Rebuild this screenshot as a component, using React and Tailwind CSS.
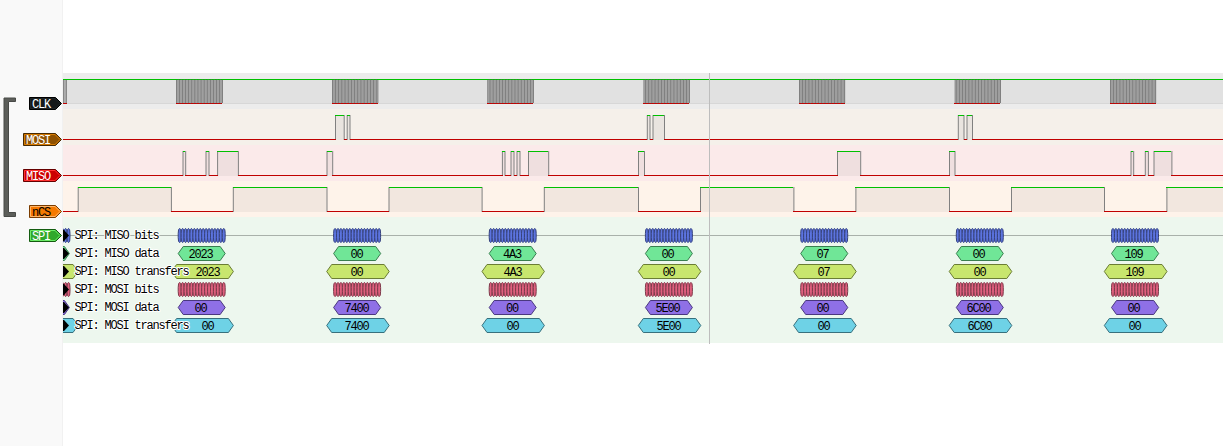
import React from "react";

const FONT = '"Liberation Mono", "DejaVu Sans Mono", monospace';

const TAGS = [
  { name: "CLK", w: 33, fill: "#16191a", light: "#1f2425", dark: "#000000", text: "#ffffff", gap: "mb-[22px]" },
  { name: "MOSI", w: 39, fill: "#8f5202", light: "#d67b03", dark: "#472901", text: "#ffffff", gap: "mb-[22px]" },
  { name: "MISO", w: 39, fill: "#cc0000", light: "#ff3232", dark: "#660000", text: "#ffffff", gap: "mb-[22px]" },
  { name: "nCS", w: 33, fill: "#f57900", light: "#ffb56a", dark: "#7a3c00", text: "#000000", gap: "mb-[10px]" },
  { name: "SPI", w: 33, fill: "#30a82c", light: "#6bea66", dark: "#145c11", text: "#ffffff", gap: "" },
];

const BURSTS = [
  [176.2, 222.8], [332.2, 378.2], [487.4, 533.8], [643.6, 689.8],
  [799.2, 845], [954.8, 1000.8], [1110.2, 1156],
];

const MOSI = [
  [335.5, 344.2], [347.2, 350], [647.3, 650], [653, 664.5], [958.3, 964], [967, 972.5],
];

const MISO = [
  [183, 185.7], [206, 209], [217.6, 238.4], [327, 332.7], [502.4, 505], [511, 514], [517, 520],
  [528.5, 548.7], [638.5, 644.5], [837.5, 860.7], [949.5, 955], [1131, 1133.7], [1145.3, 1148.4], [1154, 1171.9],
];

const NCS = [
  [78.2, 171.4], [233.3, 327], [389, 482.1], [544.3, 638.5], [700.5, 793.9],
  [855.9, 949.5], [1011.5, 1104.5], [1166.9, 1230],
];

const BITS = [[178.2, 225.2], [333.6, 380.7], [489.2, 536.2], [645.4, 692.4], [800.7, 847.8], [956.3, 1003.3], [1111.5, 1158.7]];
const XFERS = [[171.6, 233.4], [326.7, 389.2], [482, 544.4], [638.3, 700.8], [793.6, 856.2], [949.2, 1011.8], [1104.3, 1167]];
const BIT_MID = [200.5, 356.5, 512, 667.5, 822.5, 978.5, 1133.5];
const XFER_MID = [207.5, 356.5, 512.5, 668.5, 823.5, 979.5, 1134.5];
const MISO_VALUES = ["2023", "00", "4A3", "00", "07", "00", "109"];
const MOSI_VALUES = ["00", "7400", "00", "5E00", "00", "6C00", "00"];

const DECODER_ROWS = [
  { label: "SPI: MISO bits", kind: "bits", fill: "#5c74e0", stroke: "#36427c" },
  { label: "SPI: MISO data", kind: "hex", spans: BITS, mids: BIT_MID, values: MISO_VALUES, fill: "#70e697", stroke: "#387f4f", end: 69.4 },
  { label: "SPI: MISO transfers", kind: "hex", spans: XFERS, mids: XFER_MID, values: MISO_VALUES, fill: "#c8e66e", stroke: "#6b7d35", end: 78 },
  { label: "SPI: MOSI bits", kind: "bits", fill: "#e0607e", stroke: "#7d3a4a" },
  { label: "SPI: MOSI data", kind: "hex", spans: BITS, mids: BIT_MID, values: MOSI_VALUES, fill: "#8f70e6", stroke: "#4a387f", end: 69.4 },
  { label: "SPI: MOSI transfers", kind: "hex", spans: XFERS, mids: XFER_MID, values: MOSI_VALUES, fill: "#6ed2e6", stroke: "#37707d", end: 78 },
];

function Label({ x, y, children, ...rest }) {
  return (
    <text x={x} y={y} fontFamily={FONT} fontSize="12" letterSpacing="-1.2" {...rest}>
      {children}
    </text>
  );
}

function Tag({ name, w, fill, light, dark, text, gap }) {
  return (
    <svg className={`block shrink-0 ${gap}`} width={w} height="14" viewBox={`0 0 ${w} 14`}>
      <path d={`M.5 .5H${w - 6.5}L${w - 0.5} 6.5L${w - 6.5} 12.5H.5Z`} fill={fill} stroke={dark} />
      <path d={`M1.5 1.5H${w - 7}L${w - 2} 6.5L${w - 7} 11.5H1.5Z`} fill="none" stroke={light} />
      <Label x="3" y="11" fill={text}>{name}</Label>
    </svg>
  );
}

function Bracket() {
  return (
    <svg className="mt-[97px] ml-[3px] block h-[121px] w-[13px]" viewBox="0 0 13 121">
      <path d="M1 1H12.5V4.5H5.5V115.5H12.5V119.5H1Z" fill="#5c5e5a" stroke="#484a47" strokeLinejoin="round" />
    </svg>
  );
}

function Wave({ highs, bg }) {
  const lows = [];
  let at = 63;
  highs.forEach(([a, b]) => {
    lows.push([at, a]);
    at = b;
  });
  lows.push([at, 1223]);
  return (
    <svg className={`block h-9 w-[1160px] ${bg}`} viewBox="63 0 1160 36">
      {highs.map(([a, b], i) => (
        <g key={i}>
          <rect x={a} y="6" width={b - a} height="25" fill="#000" fillOpacity=".047" />
          <path d={`M${a} 6V31M${b} 6V31`} stroke="#808080" />
          <path d={`M${Math.floor(a)} 6.5H${Math.floor(b)}`} stroke="#00c000" />
        </g>
      ))}
      {lows.map(([a, b], i) => (
        <path key={i} d={`M${Math.floor(a)} 30.5H${Math.floor(b + 0.6)}`} stroke="#c00000" />
      ))}
    </svg>
  );
}

function Clock() {
  return (
    <svg className="block h-9 w-[1160px] bg-[#ececec]" viewBox="63 0 1160 36">
      <rect x="63" y="6" width="1160" height="25" fill="#e1e1e1" />
      <path d="M63 30.5H1223" stroke="#d7d7d7" />
      <path d="M63 6.5H1223" stroke="#00c000" />
      <path d="M63 18.5H67" stroke="#adadad" strokeWidth="23" />
      <path d="M63.5 7V30M66.4 7V30" stroke="#868686" />
      <path d="M63 30.5H67" stroke="#c00000" />
      {BURSTS.map(([a, b], i) => {
        const step = (b - a - 0.8) / 31;
        const edges = Array.from({ length: 32 }, (_, k) => a + 0.4 + k * step);
        return (
          <g key={i}>
            <path d={edges.map((x) => `M${x} 7V30`).join("")} stroke="#808080" strokeWidth="1.15" />
            <path d={`M${Math.floor(a)} 6.5H${Math.floor(b)}`} stroke="#2f8f2f" />
            <path d={`M${Math.floor(a)} 6.5H${Math.floor(b)}`} stroke="#00c000" strokeDasharray="1.5 1.5" />
            <path d={`M${Math.floor(a)} 30.5H${Math.floor(b)}`} stroke="#8b2020" />
            <path d={`M${Math.floor(a)} 30.5H${Math.floor(b)}`} stroke="#c80000" strokeDasharray="2 1" />
          </g>
        );
      })}
    </svg>
  );
}

function hexPath(a, b) {
  return `M${a} 9.5L${a + 5} 2.5H${b - 5}L${b} 9.5L${b - 5} 16.5H${a + 5}Z`;
}

function Bits({ a, count, fill, stroke }) {
  const step = 47 / 16;
  return Array.from({ length: count }, (_, k) => {
    const x = a + k * step;
    return (
      <rect key={k} x={x} y="2.5" width={step} height="14" rx="1.4" ry="5" fill={fill} stroke={stroke} strokeWidth="1" />
    );
  });
}

function DecoderRow({ row }) {
  return (
    <svg className="block h-[18px] w-[1160px]" viewBox="63 0 1160 18">
      {row.label === "SPI: MISO bits" && <path d="M63 9.5H1223" stroke="#a9b1aa" />}
      {row.kind === "bits" && (
        <>
          <Bits a={61.2} count={3} fill={row.fill} stroke={row.stroke} />
          {BITS.map(([a], i) => (
            <Bits key={i} a={a} count={16} fill={row.fill} stroke={row.stroke} />
          ))}
        </>
      )}
      {row.kind === "hex" && (
        <>
          <path d={`M63 2.5H${row.end - 5}L${row.end} 9.5L${row.end - 5} 16.5H63`} fill={row.fill} stroke={row.stroke} />
          {row.spans.map(([a, b], i) => (
            <g key={i}>
              <path d={hexPath(a, b)} fill={row.fill} stroke={row.stroke} />
              <Label x={row.mids[i] - row.values[i].length * 3} y="14" fill="#000">
                {row.values[i]}
              </Label>
            </g>
          ))}
        </>
      )}
      <path d="M63 4H64L69 9.5L64 15H63Z" fill="#000" />
      <Label x="74.4" y="13" fill="#000" stroke="#fff" strokeWidth="2" strokeLinejoin="round" paintOrder="stroke">
        {row.label}
      </Label>
    </svg>
  );
}

export default function App() {
  return (
    <div className="flex h-[446px] w-[1223px] overflow-hidden bg-white">
      <aside className="flex w-[63px] shrink-0 justify-between border-r border-[#f1f1f1] bg-[#f9f9f9]">
        <Bracket />
        <div className="flex flex-col items-end pt-[97px]">
          {TAGS.map((t) => (
            <Tag key={t.name} {...t} />
          ))}
        </div>
      </aside>
      <main className="relative flex w-[1160px] flex-col pt-[73px]">
        <Clock />
        <Wave highs={MOSI} bg="bg-[#f5f0ea]" />
        <Wave highs={MISO} bg="bg-[#fbeaea]" />
        <Wave highs={NCS} bg="bg-[#fef3ea]" />
        <section className="h-[126px] bg-[#edf7ee] pt-[9px]">
          {DECODER_ROWS.map((row) => (
            <DecoderRow key={row.label} row={row} />
          ))}
        </section>
        <div className="absolute top-[73px] left-[646px] h-[271px] w-px bg-[#bdbdbd]" />
      </main>
    </div>
  );
}
